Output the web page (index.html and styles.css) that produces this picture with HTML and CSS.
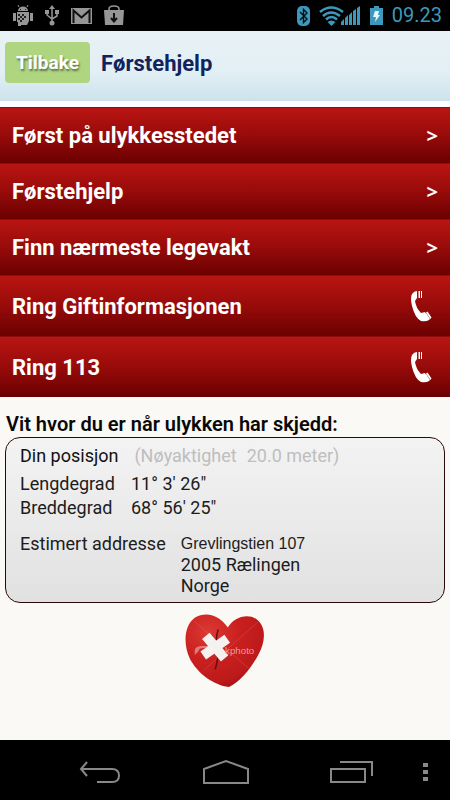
FILE: index.html
```html
<!DOCTYPE html>
<html lang="no">
<head>
<meta charset="utf-8">
<meta name="viewport" content="width=device-width, initial-scale=1">
<title>Førstehjelp</title>
<link rel="stylesheet" href="styles.css">
</head>
<body>
<div class="status">
  <div class="status-group notifications">
    <svg width="20" height="22" viewBox="0 0 20 22" fill="#969696">
      <path d="M5 6a5 4.500 0 0 1 10 0zM0 8h3v8H0zM17 8h3v8h-3zM4 7h12v9l-2 4H8v1H5v-4H4z"/>
      <path d="M6 2L5 0M14 2l1-2" stroke="#969696"/>
      <path d="M7 4h1v1H7zM12 4h1v1h-1zM5 9h2v2H5zM9 9h2v2H9zM7 11h2v2H7zM11 11h2v2h-2zM5 13h2v2H5zM9 13h2v2H9zM7 15h2v2H7z" fill="#222"/>
    </svg>
    <svg width="14" height="21" viewBox="0 0 14 21" fill="none" stroke="#969696" stroke-width="1.500">
      <path d="M7 3v14M2 7v3l5 4 5-3V7"/>
      <path d="M7 0l3 4H4zM0 5h4v4H0zM10 5h4v4h-4z" fill="#969696" stroke="none"/>
      <circle cx="7" cy="18" r="2.500" fill="#969696" stroke="none"/>
    </svg>
    <svg width="21" height="16" viewBox="0 0 21 16">
      <path d="M0 0h21v16H0z" fill="#969696"/>
      <path d="M2.500 15V2.500l8 7 8-7V15" fill="none" stroke="#111" stroke-width="2"/>
    </svg>
    <svg width="20" height="21" viewBox="0 0 20 21">
      <path d="M0 5h20l-1 15H1z" fill="#969696"/>
      <path d="M5 6V4q0-3 5-3t5 3v2" fill="none" stroke="#969696" stroke-width="1.500"/>
      <path d="M10 8v8M7 13l3 3.500 3-3.500" fill="none" stroke="#111" stroke-width="2"/>
    </svg>
  </div>
  <div class="status-group system">
    <svg width="13" height="20" viewBox="0 0 13 20">
      <rect width="13" height="20" rx="5" fill="#3d98bb"/>
      <path d="M3 6l7 7-3.500 3.500V3.500L10 7l-7 7" fill="none" stroke="#041018" stroke-width="1.400"/>
    </svg>
    <svg width="42" height="20" viewBox="0 0 42 20">
      <g fill="none" stroke="#3d98bb" stroke-width="2.600">
        <path d="M1 6q11-9 23 0M4 10q8-7 17 0M7 13.500q5.500-5 11 0"/>
      </g>
      <path d="M8.500 16q4-3 8 0l-4 4z" fill="#3d98bb"/>
      <path d="M22 19v-3l3-3v6zM26 19v-7l3-3v10zM30 19V9l3-3v13zM34 19V5l3-2v16zM38 19V2l3-2v19z" fill="#3d98bb"/>
    </svg>
    <svg width="13" height="19" viewBox="0 0 13 19">
      <path d="M0 2h4V0h5v2h4v17H0z" fill="#3d98bb"/>
      <path d="M5 5h4L8 9h2l-5 7 1-5H3z" fill="#e4f7ff"/>
    </svg>
    <time class="clock">09.23</time>
  </div>
</div>

<header class="header">
  <button class="back" type="button">Tilbake</button>
  <h1 class="title">Førstehjelp</h1>
</header>

<main class="content">
  <nav class="menu">
    <a class="row" href="#">Først på ulykkesstedet<span class="chevron">&gt;</span></a>
    <a class="row" href="#">Førstehjelp<span class="chevron">&gt;</span></a>
    <a class="row" href="#">Finn nærmeste legevakt<span class="chevron">&gt;</span></a>
    <a class="row call" href="#">Ring Giftinformasjonen
      <svg class="phone" width="21" height="32" viewBox="0 0 21 32" fill="#fff"><path d="M1 4Q3 1 6 1v7l-2 3q1 7 6 12l4-1 4 8q-3 2-8 1Q4 28 1 16-1 8 1 4zM7.500 1H9v7H7.500zM10 1h1v7h-1zM15 22.500l1.500-1 4 6-1 1.500zM14 24l1-1 4 6-1 1z"/></svg></a>
    <a class="row call" href="#">Ring 113
      <svg class="phone" width="21" height="32" viewBox="0 0 21 32" fill="#fff"><path d="M1 4Q3 1 6 1v7l-2 3q1 7 6 12l4-1 4 8q-3 2-8 1Q4 28 1 16-1 8 1 4zM7.500 1H9v7H7.500zM10 1h1v7h-1zM15 22.500l1.500-1 4 6-1 1.500zM14 24l1-1 4 6-1 1z"/></svg></a>
  </nav>

  <h2 class="subtitle">Vit hvor du er når ulykken har skjedd:</h2>
  <section class="card">
    <div class="line heading"><span>Din posisjon</span><span class="accuracy"><span>(Nøyaktighet</span><span>20.0 meter)</span></span></div>
    <dl class="coords">
      <dt>Lengdegrad</dt><dd>11° 3′ 26″</dd>
      <dt>Breddegrad</dt><dd>68° 56′ 25″</dd>
    </dl>
    <div class="line place"><span>Estimert addresse</span>
      <address class="address"><span class="street">Grevlingstien 107</span><br>2005 Rælingen<br>Norge</address>
    </div>
  </section>

  <svg class="heart" width="82" height="76" viewBox="0 0 84 76">
    <defs>
      <radialGradient id="red" cx="0.300" cy="0.250" r="0.850">
        <stop offset="0" stop-color="#dc3934"/><stop offset="0.450" stop-color="#c9201f"/><stop offset="0.800" stop-color="#bd1a1b"/><stop offset="1" stop-color="#981014"/>
      </radialGradient>
    </defs>
    <path d="M45 14C51 3 66-1 75 6c10 8 8 24 1 36C68 57 57 70 46 75 30 73 14 61 6 46-1 31 0 12 11 4 24-4 38 3 45 14z" fill="url(#red)"/>
    <path d="M35 16q-3 9-1 18t-2 23" fill="none" stroke="#650b10" stroke-width="1.500"/>
    <path d="M10 7l60 52M76 8L20 58" stroke="#eb8986" stroke-opacity="0.250"/>
    <path d="M11 42v-5q1-4 8-4h10v2H20q-5 0-5 3z" fill="#e5a19e" opacity="0.700"/>
    <g fill="#f4f1f1" transform="rotate(50 32 34)"><rect x="17" y="29" width="30" height="10"/></g>
    <g fill="#f4f1f1" transform="rotate(-35 32 34)"><rect x="17" y="29" width="30" height="10"/></g>
    <text class="watermark" x="42" y="41">kphoto</text>
  </svg>
</main>

<nav class="system-nav" aria-label="System">
  <button type="button" aria-label="Back"><svg width="42" height="24" viewBox="0 0 42 24" fill="none" stroke="#888" stroke-width="2"><path d="M8 2L2 9l6 7M2 9h31q7 0 7 6.500T33 22H18"/></svg></button>
  <button type="button" aria-label="Home"><svg width="46" height="26" viewBox="0 0 46 26" fill="none" stroke="#888" stroke-width="2"><path d="M1 24V10l22-8 22 8v14z"/></svg></button>
  <button type="button" aria-label="Recent apps"><svg width="44" height="24" viewBox="0 0 44 24" fill="none" stroke="#888" stroke-width="2"><path d="M1 9h34v13H1zM10 2h32v14"/></svg></button>
  <button class="more" type="button" aria-label="More"><svg width="5" height="18" viewBox="0 0 5 18" fill="#888"><path d="M0 0h5v4H0zM0 7h5v4H0zM0 14h5v4H0z"/></svg></button>
</nav>
</body>
</html>
```
FILE: styles.css
```css
* { box-sizing: border-box; }

body {
  margin: 0;
  min-height: 100vh;
  display: flex;
  flex-direction: column;
  background: #faf9f5;
  color: #1c1c1c;
  font-family: Roboto, "Liberation Sans", sans-serif;
}

button { border: 0; padding: 0; font-family: inherit; }
svg { display: block; flex: none; }

.status {
  height: 31px;
  padding: 0 8px 0 13px;
  display: flex;
  justify-content: space-between;
  background: #000;
}
.status-group { display: flex; align-items: center; }
.notifications { gap: 12px; }
.system { gap: 9px; }
.clock { color: #3d98bb; font-size: 20px; line-height: 31px; }

.header {
  height: 76px;
  padding: 11px 5px 0;
  display: flex;
  align-items: flex-start;
  gap: 11px;
  border-bottom: 6px solid #fdfeff;
  background: linear-gradient(#e8f2f6, #e2eff5 60%, #cce2ec);
}
.back {
  width: 85px;
  height: 41px;
  border-radius: 4px;
  background: #afd580;
  color: #fff;
  font-size: 19px;
  font-weight: 700;
  text-shadow: 1px 2px 2px #5d7345;
}
.title {
  margin: 0;
  color: #10235c;
  font-size: 22px;
  font-weight: 700;
  line-height: 43px;
}

.content { flex: 1; display: flex; flex-direction: column; }

.row {
  height: 56px;
  padding: 0 12px;
  display: flex;
  align-items: center;
  justify-content: space-between;
  border-top: 1px solid #8c0d0c;
  background: linear-gradient(#b91512, #970b0a 50%, #6b0000);
  color: #fff;
  font-size: 22px;
  font-weight: 700;
  text-decoration: none;
}
.call { height: 61px; padding-right: 18px; }
.chevron { font: 700 20px "Open Sans", sans-serif; }

.subtitle {
  margin: 14px 6px 0;
  color: #080808;
  font-size: 20px;
  font-weight: 600;
  line-height: 26px;
}
.card {
  margin: 0 5px;
  padding: 6px 14px 6px;
  border: 1px solid #2a090c;
  border-radius: 15px;
  background: linear-gradient(#f3f3f3, #e1e1e1);
  font-size: 18px;
  line-height: 24px;
}
.line { display: flex; }
.heading { gap: 16px; color: #111; }
.accuracy { display: flex; gap: 10px; color: #bebebe; }
.coords {
  margin: 4px 0 12px;
  display: grid;
  grid-template-columns: 111px 1fr;
}
.coords dd { margin: 0; }
.place { gap: 15px; }
.address { font-style: normal; line-height: 21px; }
.street { font-family: "Liberation Sans", sans-serif; font-size: 16px; }

.heart { margin: 10px auto 0; }
.watermark { font: 10px "Liberation Sans", sans-serif; fill: #e69b98; }

.system-nav {
  height: 60px;
  padding: 4px 22px 0 37px;
  display: grid;
  grid-template-columns: 1fr 1fr 1fr 13px;
  background: #000;
}
.system-nav button {
  display: flex;
  align-items: center;
  justify-content: center;
  background: none;
}
.system-nav .more { justify-content: flex-end; }
```
